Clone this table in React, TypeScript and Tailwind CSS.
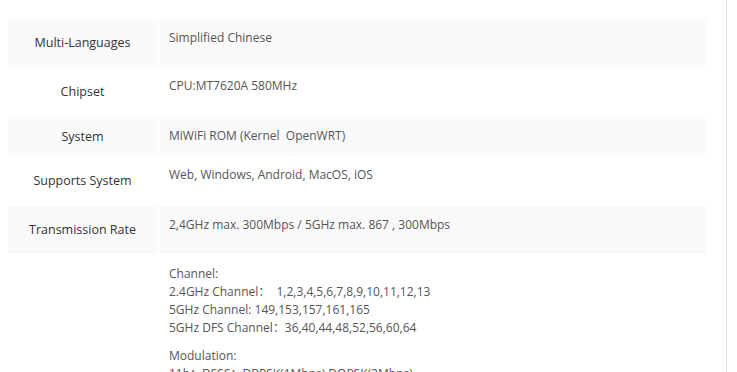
import React from "react";

const rows: { label: string; h: string; shaded: boolean; value: React.ReactNode }[] = [
  { label: "Multi-Languages", h: "h-[48px]", shaded: true, value: "Simplified Chinese" },
  { label: "Chipset", h: "h-[50px]", shaded: false, value: "CPU:MT7620A 580MHz" },
  { label: "System", h: "h-[39px]", shaded: true, value: "MiWiFi ROM (Kernel\u00a0 OpenWRT)" },
  { label: "Supports System", h: "h-[50px]", shaded: false, value: "Web, Windows, Android, MacOS, iOS" },
  { label: "Transmission Rate", h: "h-[48px]", shaded: true, value: "2,4GHz max. 300Mbps / 5GHz max. 867 , 300Mbps" },
];

export default function App() {
  return (
    <div
      className="w-[737px] h-[372px] overflow-hidden bg-white text-[12px] leading-[18px]"
      style={{ fontFamily: '"Open Sans", "Noto Sans CJK SC", sans-serif' }}
    >
      <div className="w-[727px] h-full border-r border-[#e2e2e2] pl-[8px] pt-[19px]">
        <div className="w-[698px] flex flex-col">
          {rows.map((r) => (
            <div key={r.label} className={`flex gap-[2px] ${r.h}`}>
              <div
                className={`w-[149px] flex items-center justify-center text-[12.5px] text-[#333] ${r.shaded ? "bg-[#fafafa]" : "bg-white"}`}
              >
                {r.label}
              </div>
              <div
                className={`flex-1 pl-[10px] pt-[10px] text-[#555] ${r.shaded ? "bg-[#fafafa]" : "bg-white"}`}
              >
                {r.value}
              </div>
            </div>
          ))}
          <div className="flex gap-[2px]">
            <div className="w-[149px] bg-white" />
            <div className="flex-1 pl-[10px] pt-[11px] text-[#555]">
              <p>Channel:</p>
              <p>2.4GHz Channel：&nbsp; 1,2,3,4,5,6,7,8,9,10,11,12,13</p>
              <p>5GHz Channel: 149,153,157,161,165</p>
              <p>5GHz DFS Channel：36,40,44,48,52,56,60,64</p>
              <p className="mt-[10px]">Modulation:</p>
              <p>11b：DSSS：DBPSK(1Mbps),DQPSK(2Mbps)</p>
              <p>11g：OFDM：BPSK, QPSK, 16QAM, 64QAM</p>
            </div>
          </div>
        </div>
      </div>
    </div>
  );
}
